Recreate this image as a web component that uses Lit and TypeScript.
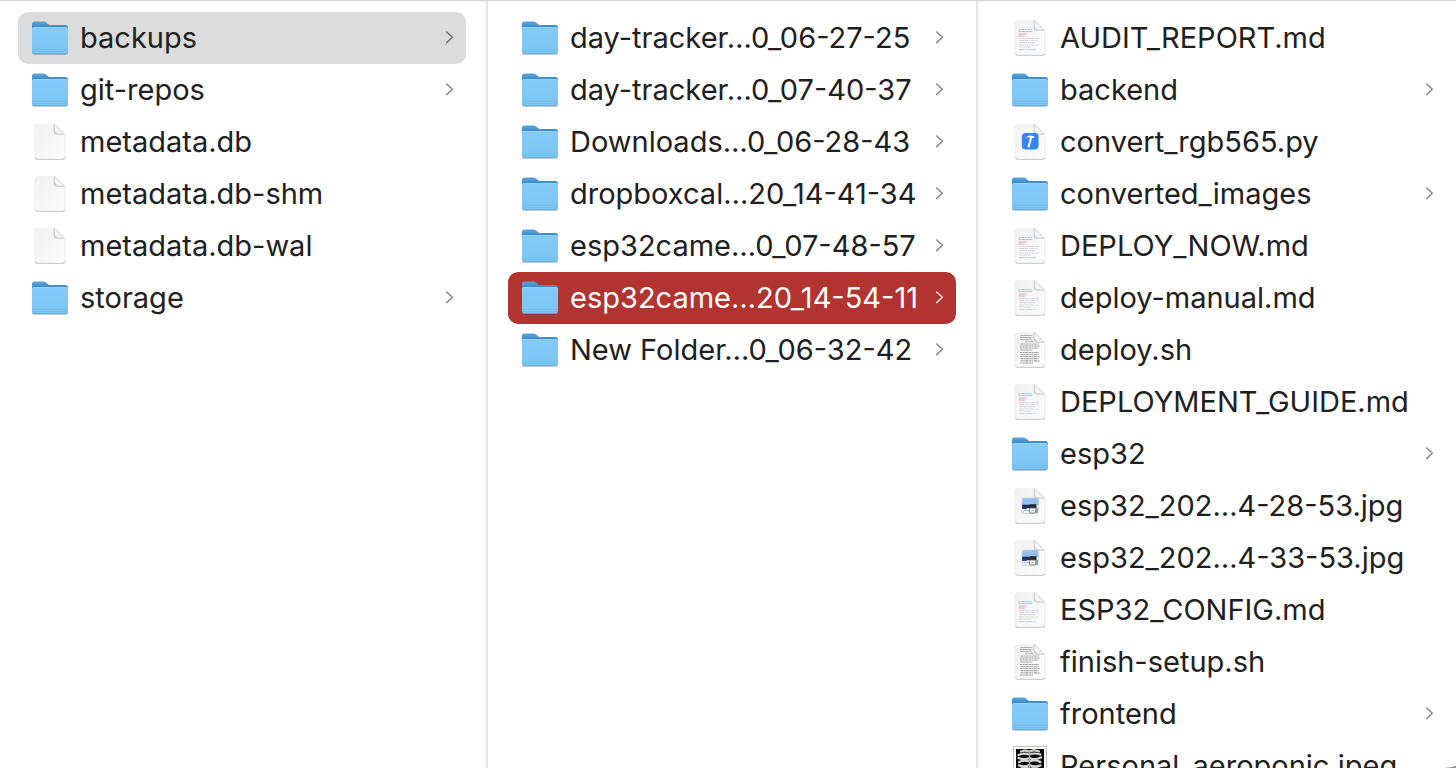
import { LitElement, html, svg, css, nothing } from "lit";
import { customElement, property, state } from "lit/decorators.js";

type Kind = "folder" | "blank" | "markdown" | "script" | "python" | "picture" | "photo";

interface Entry {
  name: string;
  kind: Kind;
}

const COLUMNS: Entry[][] = [
  [
    { name: "backups", kind: "folder" },
    { name: "git-repos", kind: "folder" },
    { name: "metadata.db", kind: "blank" },
    { name: "metadata.db-shm", kind: "blank" },
    { name: "metadata.db-wal", kind: "blank" },
    { name: "storage", kind: "folder" },
  ],
  [
    { name: "day-tracker…0_06-27-25", kind: "folder" },
    { name: "day-tracker…0_07-40-37", kind: "folder" },
    { name: "Downloads…0_06-28-43", kind: "folder" },
    { name: "dropboxcal…20_14-41-34", kind: "folder" },
    { name: "esp32came…0_07-48-57", kind: "folder" },
    { name: "esp32came…20_14-54-11", kind: "folder" },
    { name: "New Folder…0_06-32-42", kind: "folder" },
  ],
  [
    { name: "AUDIT_REPORT.md", kind: "markdown" },
    { name: "backend", kind: "folder" },
    { name: "convert_rgb565.py", kind: "python" },
    { name: "converted_images", kind: "folder" },
    { name: "DEPLOY_NOW.md", kind: "markdown" },
    { name: "deploy-manual.md", kind: "markdown" },
    { name: "deploy.sh", kind: "script" },
    { name: "DEPLOYMENT_GUIDE.md", kind: "markdown" },
    { name: "esp32", kind: "folder" },
    { name: "esp32_202…4-28-53.jpg", kind: "picture" },
    { name: "esp32_202…4-33-53.jpg", kind: "picture" },
    { name: "ESP32_CONFIG.md", kind: "markdown" },
    { name: "finish-setup.sh", kind: "script" },
    { name: "frontend", kind: "folder" },
    { name: "Personal_aeroponic.jpeg", kind: "photo" },
  ],
];

@customElement("file-icon")
export class FileIcon extends LitElement {
  @property() kind: Kind = "blank";

  static styles = css`
    :host {
      display: block;
      flex: none;
      width: 40px;
      height: 40px;
    }
    svg {
      display: block;
      overflow: visible;
    }
  `;

  private folder() {
    return svg`
      <defs>
        <linearGradient id="tab" x1="0" y1="0" x2="0" y2="1">
          <stop offset="0" stop-color="#5ea7d8" />
          <stop offset=".4" stop-color="#3684c8" />
        </linearGradient>
        <linearGradient id="front" x1="0" y1="0" x2="0" y2="1">
          <stop offset="0" stop-color="#84cbf8" />
          <stop offset="1" stop-color="#7ac6f5" />
        </linearGradient>
      </defs>
      <rect x="2" y="10" width="36" height="26.8" rx="2.4" fill="#000" opacity=".25" />
      <path d="M2 5.800A2.400 2.400 0 0 1 4.400 3.400h8.800c1.600 0 2.200.4 3.200 1.300l1.400 1.300c.9.8 1.500 1.100 2.800 1.100h15A2.400 2.400 0 0 1 38 9.500V20H2z" fill="url(#tab)" />
      <path d="M2 11.100a2 2 0 0 1 2-2h32a2 2 0 0 1 2 2v22.500a2.200 2.200 0 0 1-2.200 2.200H4.200A2.200 2.200 0 0 1 2 33.600z" fill="url(#front)" />
      <path d="M2.400 10.800c0-.6.6-1.200 1.600-1.200h32c1 0 1.600.6 1.600 1.200" fill="none" stroke="#a0dafb" stroke-width=".7" />
      <path d="M2 31.500h36M2 33.500h36" stroke="#70b9e6" stroke-width=".7" />
      <path d="M2.600 34.900q.6.800 1.600.8h31.600q1 0 1.600-.8" fill="none" stroke="#5a9fcb" stroke-width=".8" />
    `;
  }

  private sheet() {
    return svg`
      <defs>
        <linearGradient id="paper" x1="0" y1="0" x2="1" y2="1">
          <stop offset="0" stop-color="#f1f1f1" />
          <stop offset="1" stop-color="#fcfcfc" />
        </linearGradient>
        <linearGradient id="fold" x1="0" y1="1" x2=".7" y2=".3">
          <stop offset="0" stop-color="#c6c6c6" />
          <stop offset=".4" stop-color="#fafafa" />
          <stop offset="1" stop-color="#dedede" />
        </linearGradient>
      </defs>
      <path d="M5.500 5a2 2 0 0 1 2-2h17L34.600 13v22.200a2 2 0 0 1-2 2H7.500a2 2 0 0 1-2-2z" fill="none" stroke="#000" stroke-opacity=".08" stroke-width="1.800" />
      <path d="M5.800 35.500q.5 1.500 1.800 1.500h24.900q1.300 0 1.800-1.500" fill="none" stroke="#000" stroke-opacity=".24" stroke-width="1.200" />
      <path d="M5.500 4.200a2 2 0 0 1 2-2h17.100L34.500 12v22.700a2 2 0 0 1-2 2h-25a2 2 0 0 1-2-2z" fill="url(#paper)" />
    `;
  }

  private fold() {
    return svg`
      <path d="M24.500 2.200V10a2 2 0 0 0 2 2h8z" fill="url(#fold)" />
      <path d="M24.200 2.600V10a2.200 2.200 0 0 0 2.200 2.200h7.800" fill="none" stroke="#bdbdbd" stroke-width=".8" />
      <path d="M24.500 2.200 34.500 12" stroke="#d4d4d4" stroke-width=".7" />
    `;
  }

  private markdown() {
    return svg`
      <g fill="none" stroke-width="1">
        <path d="M8.500 11.500h14" stroke="#a5cfcc" stroke-dasharray="1.500 .5 3.500 .6" />
        <path d="M8.500 13.500h14" stroke="#a6bfea" stroke-dasharray="2.500 .5 4 .6" />
        <path d="M9 16h8" stroke="#e9a3cd" stroke-dasharray="3 .4" />
        <path d="M8.500 18h6" stroke="#f09cab" />
        <path d="M9 20.500h20M9 22.500h19M9 27h20" stroke="#d9d9d9" stroke-dasharray="3 .5 2 .5" />
        <path d="M9 24.700h16" stroke="#dfc9ea" stroke-dasharray="4 .5" />
        <path d="M9 29h12" stroke="#dadada" stroke-dasharray="3 .5" />
        <path d="M9 31.700h17" stroke="#b7d5f2" stroke-dasharray="5 .5 2 .5" />
      </g>
    `;
  }

  private script() {
    return svg`
      <g fill="none" stroke="#a6a6a6" stroke-width="1.200">
        <path d="M10.500 5.500h12M10 7.500h12.500M10.500 9.500h12M15 11.500h8M10.500 14h18.500M10 16h19.500M10 18h18M10.500 20h12M10 22.500h19M10.500 24.500h18M10 26.500h19.500M10.500 28.700h18M10.500 30.800h19M10 33h13" stroke-dasharray="2.500 .4 1.500 .3 3.500 .5" />
      </g>
    `;
  }

  private python() {
    return svg`
      <rect x="11.800" y="11" width="16.800" height="16.500" rx="4" fill="#3684f6" />
      <path d="M15.800 16.400q1.200-2.900 4.400-2.900 1.600 0 2.800.6l1.300-.1-.4 1.900-1.700-.2-2.800 9.900-1.900-.5 2.600-9.700q-2.100-.5-4.300 1z" fill="#fff" />
    `;
  }

  private picture() {
    return svg`
      <rect x="12" y="12" width="16.500" height="15.500" rx="1.800" fill="#e9ecf1" stroke="#b9c4d3" stroke-width=".5" />
      <path d="M12.200 14q0-1.700 1.700-1.700h12.700q1.700 0 1.700 1.700v5H12.200z" fill="#94bff0" />
      <path d="M12.200 18.700h8.200v3.500h-8.200z" fill="#1c2c56" />
      <path d="M20 18.200h6.500v4H20z" fill="#25282e" />
      <path d="M12.200 21.500h4.500v1.500h-4.500z" fill="#304276" />
      <path d="M14 24.500h5" stroke="#b4bfd0" />
      <rect x="19.500" y="22" width="6" height="5" rx="1.200" fill="#fafafa" stroke="#5e6671" stroke-width=".8" />
      <path d="M27 22v5" stroke="#6a7079" stroke-width="1.200" />
      <path d="M21.500 24.500h2.200" stroke="#a5abb3" />
    `;
  }

  private photo() {
    return svg`
      <rect x="3.500" y=".5" width="33" height="38" fill="#fff" stroke="#c4c4c4" stroke-width="1" />
      <rect x="6" y="3" width="28" height="33" fill="#080808" />
      <g fill="none" stroke="#d4d4d0" stroke-width="2.200" stroke-linecap="round">
        <path d="M11 5.500l4-1 4 1 5-1.300 5 1.300" />
        <path d="M8.500 9q5-2.500 10.500-.5 5.500-2 11.500 0" />
        <path d="M8.500 12q6 2.500 11 0 5 2.500 11.500-.5" />
        <path d="M9 16q5-2.500 10.500-.5 5.500-2.500 11 .5" />
        <path d="M9 19.500q5.500 2 10.500-.5 5 2.500 11 .5" />
        <path d="M9 23.500q6-3 10.500-.5 5.500-2 11 .5M9 27.500h22M10 31.500h20" />
      </g>
      <path d="M19.500 5v29" stroke="#9d9d98" stroke-width="1.200" />
    `;
  }

  private glyph() {
    switch (this.kind) {
      case "folder":
        return this.folder();
      case "photo":
        return this.photo();
      case "markdown":
        return svg`${this.sheet()}${this.markdown()}${this.fold()}`;
      case "script":
        return svg`${this.sheet()}${this.script()}${this.fold()}`;
      case "python":
        return svg`${this.sheet()}${this.fold()}${this.python()}`;
      case "picture":
        return svg`${this.sheet()}${this.fold()}${this.picture()}`;
      default:
        return svg`${this.sheet()}${this.fold()}`;
    }
  }

  render() {
    return html`<svg width="40" height="40" viewBox="0 0 40 40" aria-hidden="true">${this.glyph()}</svg>`;
  }
}

@customElement("app-root")
export class AppRoot extends LitElement {
  @state() private selected: number[] = [0, 5, -1];

  static styles = css`
    :host {
      display: block;
      position: relative;
      height: 100vh;
      overflow: hidden;
      background: #fff;
      color: #202020;
      font-family: Inter, "Liberation Sans", sans-serif;
      font-size: 29px;
      line-height: 36px;
    }
    .browser {
      box-sizing: border-box;
      height: 100%;
      display: grid;
      grid-template-columns: minmax(0, 488fr) minmax(0, 490fr) minmax(0, 478fr);
      grid-template-rows: minmax(0, 1fr);
      border-top: 1px solid #d4d4d4;
    }
    .column {
      margin: 0;
      padding: 11px 20px 0;
      list-style: none;
      overflow: hidden;
      border-right: 2px solid #e3e3e3;
    }
    .column:first-child {
      padding-left: 18px;
    }
    .column:last-child {
      padding-right: 10px;
      border-right: 0;
    }
    .row {
      box-sizing: border-box;
      width: 100%;
      height: 52px;
      display: flex;
      align-items: center;
      gap: 10px;
      padding: 0 12px;
      border: 0;
      border-radius: 10px;
      background: none;
      color: inherit;
      font: inherit;
      text-align: left;
    }
    .name {
      flex: 1;
      min-width: 0;
      white-space: nowrap;
    }
    .chevron {
      flex: none;
      width: 10px;
      height: 16px;
      margin-left: -10px;
      color: #8a8a8a;
    }
    .path {
      background: #dcdcdc;
    }
    .path .chevron {
      color: #717171;
    }
    .current {
      background: #b23431;
      color: #fff;
    }
    .current .chevron {
      color: #f3dddd;
    }
    .corner {
      position: absolute;
      right: 0;
      bottom: 0;
    }
  `;

  private select(column: number, row: number) {
    this.selected = this.selected.map((value, i) => (i < column ? value : i === column ? row : -1));
  }

  private row(entry: Entry, column: number, index: number) {
    const chosen = this.selected[column] === index;
    const deepest = (this.selected[column + 1] ?? -1) < 0;
    const mark = chosen ? (deepest ? "current" : "path") : "";
    return html`
      <li>
        <button class="row ${mark}" aria-pressed=${chosen} @click=${() => this.select(column, index)}>
          <file-icon kind=${entry.kind}></file-icon>
          <span class="name">${entry.name}</span>
          ${entry.kind === "folder"
            ? html`<svg class="chevron" viewBox="0 0 10 16" aria-hidden="true">
                <path d="M2.600 2 8.400 7.300 2.600 12.600" fill="none" stroke="currentColor" stroke-width="1.500" stroke-linecap="round" stroke-linejoin="round" />
              </svg>`
            : nothing}
        </button>
      </li>
    `;
  }

  render() {
    return html`
      <main class="browser">
        ${COLUMNS.map(
          (entries, column) => html`<ul class="column">
            ${entries.map((entry, index) => this.row(entry, column, index))}
          </ul>`
        )}
      </main>
      <svg class="corner" width="12" height="2" viewBox="0 0 12 2" aria-hidden="true">
        <path d="M0 2Q7 1.600 12 0V2z" fill="#8f8f8f" />
      </svg>
    `;
  }
}
